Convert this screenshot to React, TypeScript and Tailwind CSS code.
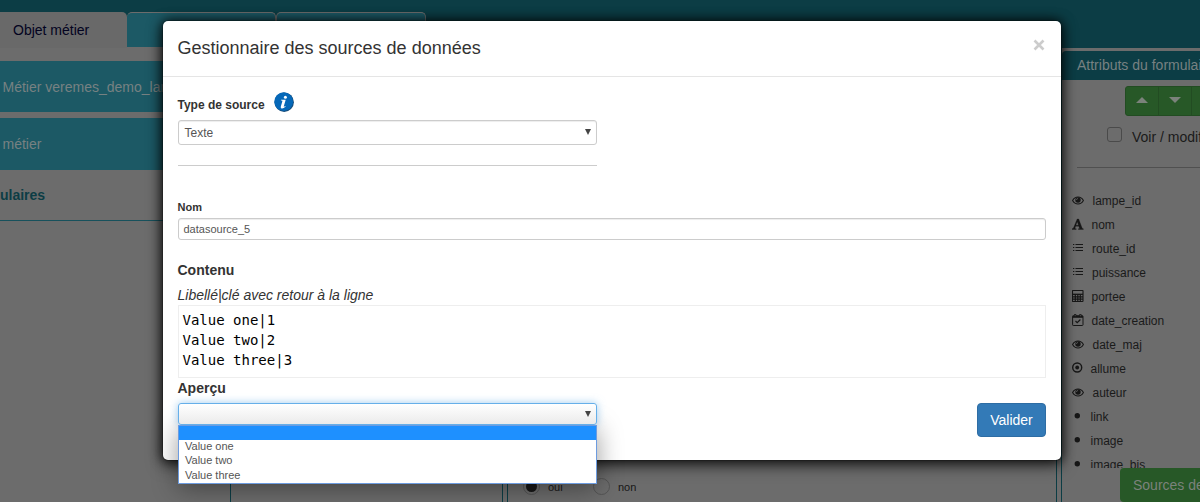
import React from "react";

type IconName = "eye" | "font" | "list" | "calc" | "calendar" | "radio" | "dot";

const attributes: { icon: IconName; label: string; pad: string }[] = [
  { icon: "eye", label: "lampe_id", pad: "pl-[20.500px]" },
  { icon: "font", label: "nom", pad: "pl-[19.500px]" },
  { icon: "list", label: "route_id", pad: "pl-[20px]" },
  { icon: "list", label: "puissance", pad: "pl-[20px]" },
  { icon: "calc", label: "portee", pad: "pl-[19.500px]" },
  { icon: "calendar", label: "date_creation", pad: "pl-[19.500px]" },
  { icon: "eye", label: "date_maj", pad: "pl-[20.500px]" },
  { icon: "radio", label: "allume", pad: "pl-[18.500px]" },
  { icon: "eye", label: "auteur", pad: "pl-[20.500px]" },
  { icon: "dot", label: "link", pad: "pl-[18.500px]" },
  { icon: "dot", label: "image", pad: "pl-[18.500px]" },
  { icon: "dot", label: "image_bis", pad: "pl-[18.500px]" },
];

function AttributeIcon({ name }: { name: IconName }) {
  return (
    <svg width="13" height="13" viewBox="0 0 13 13" fill="none" stroke="#171717" className="block">
      {name === "eye" && (
        <>
          <path d="M.6 6.500C1.900 4.200 3.800 3 6 3s4.100 1.200 5.400 3.500C10.100 8.800 8.200 10 6 10S1.900 8.800.6 6.500Z" strokeWidth="1.100" />
          <circle cx="6" cy="6" r="2.700" fill="#171717" stroke="none" />
          <path d="M4.400 6A1.600 1.600 0 0 1 6 4.500" stroke="#6c6c6c" strokeWidth=".7" />
        </>
      )}
      {name === "font" && (
        <path
          d="M5.200 1h1.500l3.500 9.300 1.100.4v.8H6.400v-.8l1.200-.3-.8-2.200H3.600L2.900 10.400l1.300.3v.8H.1v-.8l1.200-.4L5.200 1ZM5.200 3.700 3.900 7.300h2.600L5.200 3.700Z"
          fill="#171717"
          strokeWidth=".3"
          fillRule="evenodd"
        />
      )}
      {name === "list" && <path d="M1 2.500h1.300M3.500 2.500H11M1 5.500h1.300M3.500 5.500H11M1 8.500h1.300M3.500 8.500H11" />}
      {name === "calc" && (
        <>
          <rect x=".5" y=".5" width="10.500" height="11" rx=".5" strokeWidth="1.100" />
          <path d="M1 4.300h10" strokeWidth="1.300" />
          <path d="M1 6.900h10M1 9.200h10M3.300 4.500v7M5.800 4.500v7M8.300 4.500v7" strokeWidth="1.200" />
        </>
      )}
      {name === "calendar" && (
        <>
          <rect x=".6" y="1.800" width="10.400" height="9.700" rx=".7" />
          <path d="M.6 2.700H11" strokeWidth="2.200" />
          <path d="M3.200 0v3M8.400 0v3" strokeWidth="2" />
          <path d="M3.200.7v1.500M8.400.7v1.500" stroke="#6c6c6c" strokeWidth=".6" />
          <path d="m3.500 7 1.700 1.700 3.200-3.200" strokeWidth="1.200" />
        </>
      )}
      {name === "radio" && (
        <>
          <circle cx="5.200" cy="5.500" r="4.500" strokeWidth="1.400" />
          <circle cx="5.200" cy="5.500" r="1.900" fill="#171717" stroke="none" />
        </>
      )}
      {name === "dot" && <circle cx="5.300" cy="5.800" r="2.700" fill="#171717" stroke="none" />}
    </svg>
  );
}

function Background() {
  return (
    <div className="flex h-[502px] w-[1200px] flex-col bg-[#6c6c6c]">
      <header className="flex h-[48px] shrink-0 items-start bg-[#0c3d45] text-[14px]">
        <div className="flex h-[48px] w-[427px] items-start pt-[12px]">
          <div className="h-[36px] w-[127px] rounded-tr-[5px] bg-[#696969] pl-[13px] leading-[36px] text-[#03031f]">Objet métier</div>
          <div className="flex h-[36px] w-[300px] border-b border-[#6c6c6c]">
            <div className="h-[35px] w-[149px] rounded-t-[5px] border-t border-r border-[#6c6c6c] bg-[#1c5965]" />
            <div className="h-[35px] w-[150px] rounded-t-[5px] border border-b-0 border-[#6c6c6c] bg-[#1c5965]" />
          </div>
        </div>
      </header>
      <div className="flex min-h-0 flex-1">
        <aside className="flex w-[231px] shrink-0 flex-col border-r border-[#0c3d45] pt-[13px] text-[14px] text-[#778182]">
          <div className="h-[51px] shrink-0 bg-[#1c5965] pl-[2.500px] leading-[52px] whitespace-nowrap">Métier veremes_demo_lampe</div>
          <div className="mt-[6px] h-[52px] shrink-0 bg-[#1c5965] pl-[2.500px] leading-[52px]">métier</div>
          <div className="h-[51px] shrink-0 border-b border-[#17515c] leading-[50px] font-bold text-[#0c3d45]">ulaires</div>
        </aside>
        <div className="mr-[4px] w-[272px] shrink-0 border-r border-[#0c3d45]" />
        <main className="flex w-[550px] shrink-0 flex-col justify-end border-x border-[#0c3d45]">
          <div className="flex h-[31px] items-center pl-[15px] text-[11px] text-[#171717]">
            <span className="flex h-[17px] w-[17px] items-center justify-center rounded-full border border-[#555555]">
              <span className="h-[11px] w-[11px] rounded-full bg-[#171717]" />
            </span>
            <span className="w-[53px] pt-[2px] pl-[8px]">oui</span>
            <span className="h-[17px] w-[17px] rounded-full border border-[#555555]" />
            <span className="pt-[2px] pl-[8px]">non</span>
          </div>
        </main>
        <section className="ml-[4px] flex w-[139px] shrink-0 flex-col overflow-hidden border-l border-[#0c3d45] pt-[3px] text-[#1a1a1a]">
          <div className="h-[29px] shrink-0 rounded-tl-[4px] bg-[#0c3d45] pl-[15px] text-[14px] leading-[29px] whitespace-nowrap text-[#778182]">
            Attributs du formulaire
          </div>
          <div className="mt-[6px] ml-[63px] flex h-[30px] w-[110px] shrink-0 rounded-[3px] border border-[#224c22] bg-[#275827]">
            {["M1 6 7 0l6 6Z", "M1 0h12L7 6Z"].map((d) => (
              <span key={d} className="flex w-[33px] items-center justify-center border-r border-[#224c22] pb-[2px]">
                <svg width="14" height="6" viewBox="0 0 14 6" fill="#7b827b">
                  <path d={d} />
                </svg>
              </span>
            ))}
          </div>
          <div className="mt-[11px] ml-[45px] flex h-[20px] shrink-0 items-start text-[14px] whitespace-nowrap">
            <span className="h-[15px] w-[15px] shrink-0 rounded-[3px] border border-[#4a4a4a]" />
            <span className="pl-[10px] leading-[20px]">Voir / modifier</span>
          </div>
          <div className="mt-[20px] ml-[15px] h-px shrink-0 bg-[#505050]" />
          <div className="mt-[21px] h-[279px] shrink-0 overflow-hidden pl-[10px]">
            {attributes.map((item) => (
              <div key={item.label} className="relative flex h-[24px] items-center text-[12px]">
                <span className="absolute top-[5px] left-0">
                  <AttributeIcon name={item.icon} />
                </span>
                <span className={item.pad}>{item.label}</span>
              </div>
            ))}
          </div>
          <div className="ml-[58px] h-[34px] shrink-0 rounded-l-[4px] bg-[#275827] pl-[13px] text-[14px] leading-[34px] whitespace-nowrap text-[#7b827b]">
            Sources de données
          </div>
        </section>
      </div>
    </div>
  );
}

function InfoIcon() {
  return (
    <svg width="20" height="20" viewBox="0 0 20 20" className="block">
      <circle cx="10.200" cy="10.200" r="9.700" fill="#164b78" />
      <circle cx="9.700" cy="9.700" r="9.400" fill="#0568b8" />
      <circle cx="11.400" cy="5.200" r="1.500" fill="#fff" />
      <path d="M7 7.700h4.700l-1.900 6.600c-.2.700.2.800 1.500-.2l.4.500c-1.700 1.700-3.200 2.100-4.200 1.800-.8-.3-.9-1.100-.6-2.100l1.400-4.700c.2-.8 0-1.100-.9-1.100l-.5-.1Z" fill="#fff" />
    </svg>
  );
}

function Arrow() {
  return (
    <svg width="6" height="6" viewBox="0 0 6 6" fill="#444" className="block">
      <path d="M0 0h6L3 6Z" />
    </svg>
  );
}

function Dialog() {
  return (
    <div className="absolute top-[20px] left-[162px] flex h-[441px] w-[900px] flex-col rounded-[6px] border border-black/20 bg-white bg-clip-padding text-[#333] shadow-[0_5px_15px_rgba(0,0,0,0.5),0_0_12px_rgba(0,0,0,0.8)]">
      <div className="flex h-[56px] shrink-0 items-start justify-between border-b border-[#e5e5e5] pr-[16px] pl-[14.500px]">
        <h4 className="pt-[14px] text-[18px] leading-[26px]">Gestionnaire des sources de données</h4>
        <svg width="12" height="12" viewBox="0 0 12 12" className="mt-[18px]" stroke="#ccc" strokeWidth="2.600">
          <path d="m1.500 1.500 9 9m0-9-9 9" />
        </svg>
      </div>
      <div className="flex flex-1 flex-col px-[15px]">
        <div className="flex h-[43px] shrink-0 items-start pt-[15px]">
          <label className="-ml-[0.5px] w-[96.5px] pt-[4px] text-[12px] leading-[18px] font-bold">Type de source</label>
          <InfoIcon />
        </div>
        <div className="flex h-[25px] w-[419px] shrink-0 items-center justify-between rounded-[3px] border border-[#ccc] pr-[5px] pl-[5.5px] text-[12px] text-[#555] shadow-[inset_0_1px_1px_rgba(0,0,0,0.075)]">
          <span>Texte</span>
          <span className="pb-[2px]"><Arrow /></span>
        </div>
        <div className="mt-[20px] h-px w-[419px] shrink-0 bg-[#ccc]" />
        <label className="mt-[33px] -ml-[0.5px] h-[19px] shrink-0 text-[11px] leading-[16px] font-bold">Nom</label>
        <div className="h-[22px] shrink-0 rounded-[3px] border border-[#ccc] pl-[4.5px] text-[11px] leading-[20px] text-[#555] shadow-[inset_0_1px_1px_rgba(0,0,0,0.075)]">
          datasource_5
        </div>
        <label className="mt-[20px] -ml-[0.5px] h-[25px] shrink-0 text-[14px] leading-[20px] font-bold">Contenu</label>
        <p className="-ml-[0.5px] h-[20px] shrink-0 text-[14px] leading-[20px] italic">Libellé|clé avec retour à la ligne</p>
        <pre className="h-[73px] shrink-0 border border-[#eee] px-[3.5px] pt-[4px] font-['DejaVu_Sans_Mono',monospace] text-[14px] leading-[20px] text-black">
          {"Value one|1\nValue two|2\nValue three|3"}
        </pre>
        <label className="-ml-[0.5px] h-[25px] shrink-0 text-[14px] leading-[20px] font-bold">Aperçu</label>
        <div className="flex items-start justify-between">
          <div className="relative">
            <div className="h-[22px] w-[419px] rounded-[3px] shadow-[0_0_8px_rgba(102,175,233,0.6)]" />
            <div className="absolute top-[22px] left-0 h-[59px] w-[419px] border border-[#6d9ce0] bg-white text-[11px] text-[#555] shadow-[0_4px_26px_rgba(0,0,0,0.4)]">
              <div className="h-[14px] bg-[#1e90ff]" />
              <div className="h-[14px] pl-[6px] leading-[12px]">Value one</div>
              <div className="h-[14px] pl-[6px] leading-[12px]">Value two</div>
              <div className="h-[14px] pl-[6px] leading-[14px]">Value three</div>
            </div>
            <div className="absolute inset-0 flex items-center justify-end rounded-[3px] border border-[#66afe9] bg-gradient-to-b from-white to-[#ebebeb] pr-[5px]">
              <Arrow />
            </div>
          </div>
          <button className="h-[34px] w-[69px] rounded-[4px] border border-[#2e6da4] bg-[#337ab7] text-[14px] text-white">Valider</button>
        </div>
      </div>
    </div>
  );
}

export default function App() {
  return (
    <div className="relative h-[502px] w-[1200px] overflow-hidden font-['Liberation_Sans',Arial,sans-serif]">
      <Background />
      <Dialog />
    </div>
  );
}
